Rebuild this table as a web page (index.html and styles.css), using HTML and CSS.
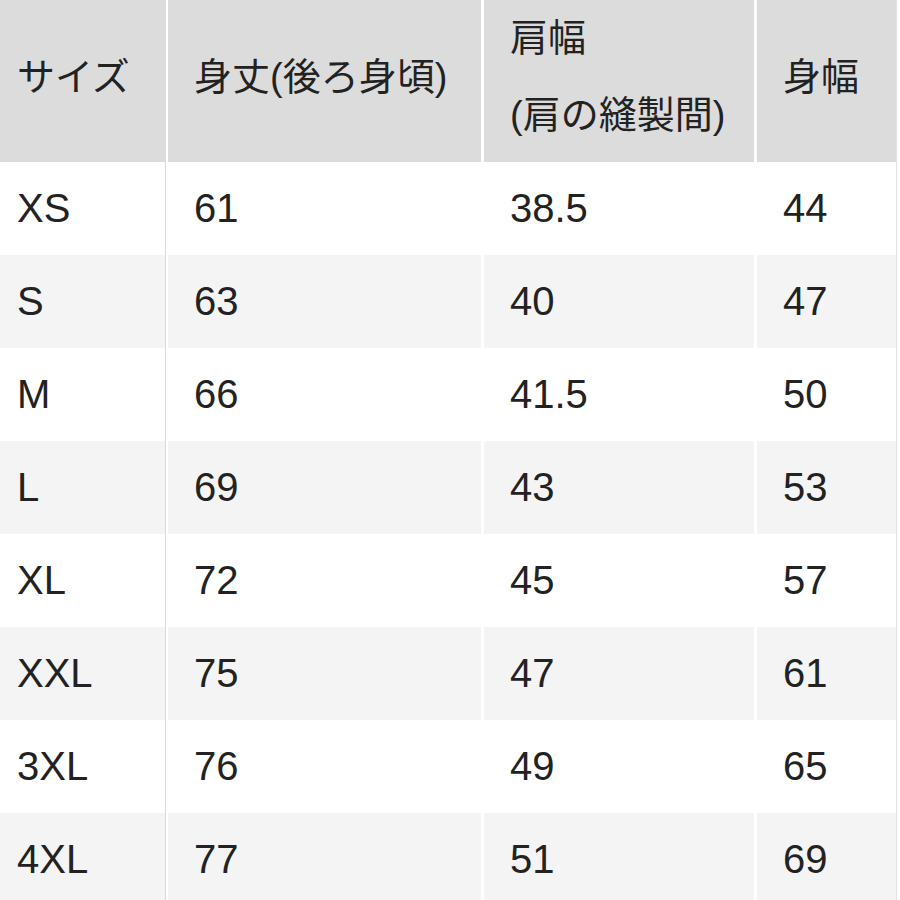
FILE: index.html
```html
<!DOCTYPE html>
<html lang="ja">
<head>
<meta charset="utf-8">
<title>サイズ表</title>
<link rel="stylesheet" href="styles.css">
</head>
<body>
<div class="size-table">
  <div class="row head">
    <div class="cell c1"><span>サイズ</span></div>
    <div class="cell"><span>身丈(後ろ身頃)</span></div>
    <div class="cell"><span>肩幅<br>(肩の縫製間)</span></div>
    <div class="cell c4"><span>身幅</span></div>
  </div>
  <div class="row"><div class="cell c1">XS</div><div class="cell">61</div><div class="cell">38.5</div><div class="cell c4">44</div></div>
  <div class="row alt"><div class="cell c1">S</div><div class="cell">63</div><div class="cell">40</div><div class="cell c4">47</div></div>
  <div class="row"><div class="cell c1">M</div><div class="cell">66</div><div class="cell">41.5</div><div class="cell c4">50</div></div>
  <div class="row alt"><div class="cell c1">L</div><div class="cell">69</div><div class="cell">43</div><div class="cell c4">53</div></div>
  <div class="row"><div class="cell c1">XL</div><div class="cell">72</div><div class="cell">45</div><div class="cell c4">57</div></div>
  <div class="row alt"><div class="cell c1">XXL</div><div class="cell">75</div><div class="cell">47</div><div class="cell c4">61</div></div>
  <div class="row"><div class="cell c1">3XL</div><div class="cell">76</div><div class="cell">49</div><div class="cell c4">65</div></div>
  <div class="row alt"><div class="cell c1">4XL</div><div class="cell">77</div><div class="cell">51</div><div class="cell c4">69</div></div>
</div>
</body>
</html>
```
FILE: styles.css
```css
html, body {
  margin: 0;
  padding: 0;
  background: #ffffff;
  overflow: hidden;
}
body {
  font-family: "Liberation Sans", "Noto Sans CJK JP", sans-serif;
  font-size: 40px;
  color: #222222;
}
.size-table {
  display: flex;
  flex-direction: column;
  width: 900px;
}
.row {
  display: grid;
  grid-template-columns: 165px 313px 270px 139px;
  column-gap: 3px;
  height: 93px;
}
.row.head {
  height: 162px;
}
.cell {
  display: flex;
  align-items: center;
  padding-left: 26px;
  background: #ffffff;
  box-sizing: border-box;
  white-space: nowrap;
}
.cell.c1 {
  padding-left: 17px;
  box-shadow: 1px 0 0 #dadada;
}
.cell.c4 {
  box-shadow: 1px 0 0 #e2e2e2;
}
.row.alt .cell {
  background: #f4f4f4;
}
.row.head .cell {
  background: #dcdcdc;
  font-size: 38px;
  line-height: 77px;
  padding-bottom: 12px;
}
.row.head .cell span {
  display: block;
}
```
